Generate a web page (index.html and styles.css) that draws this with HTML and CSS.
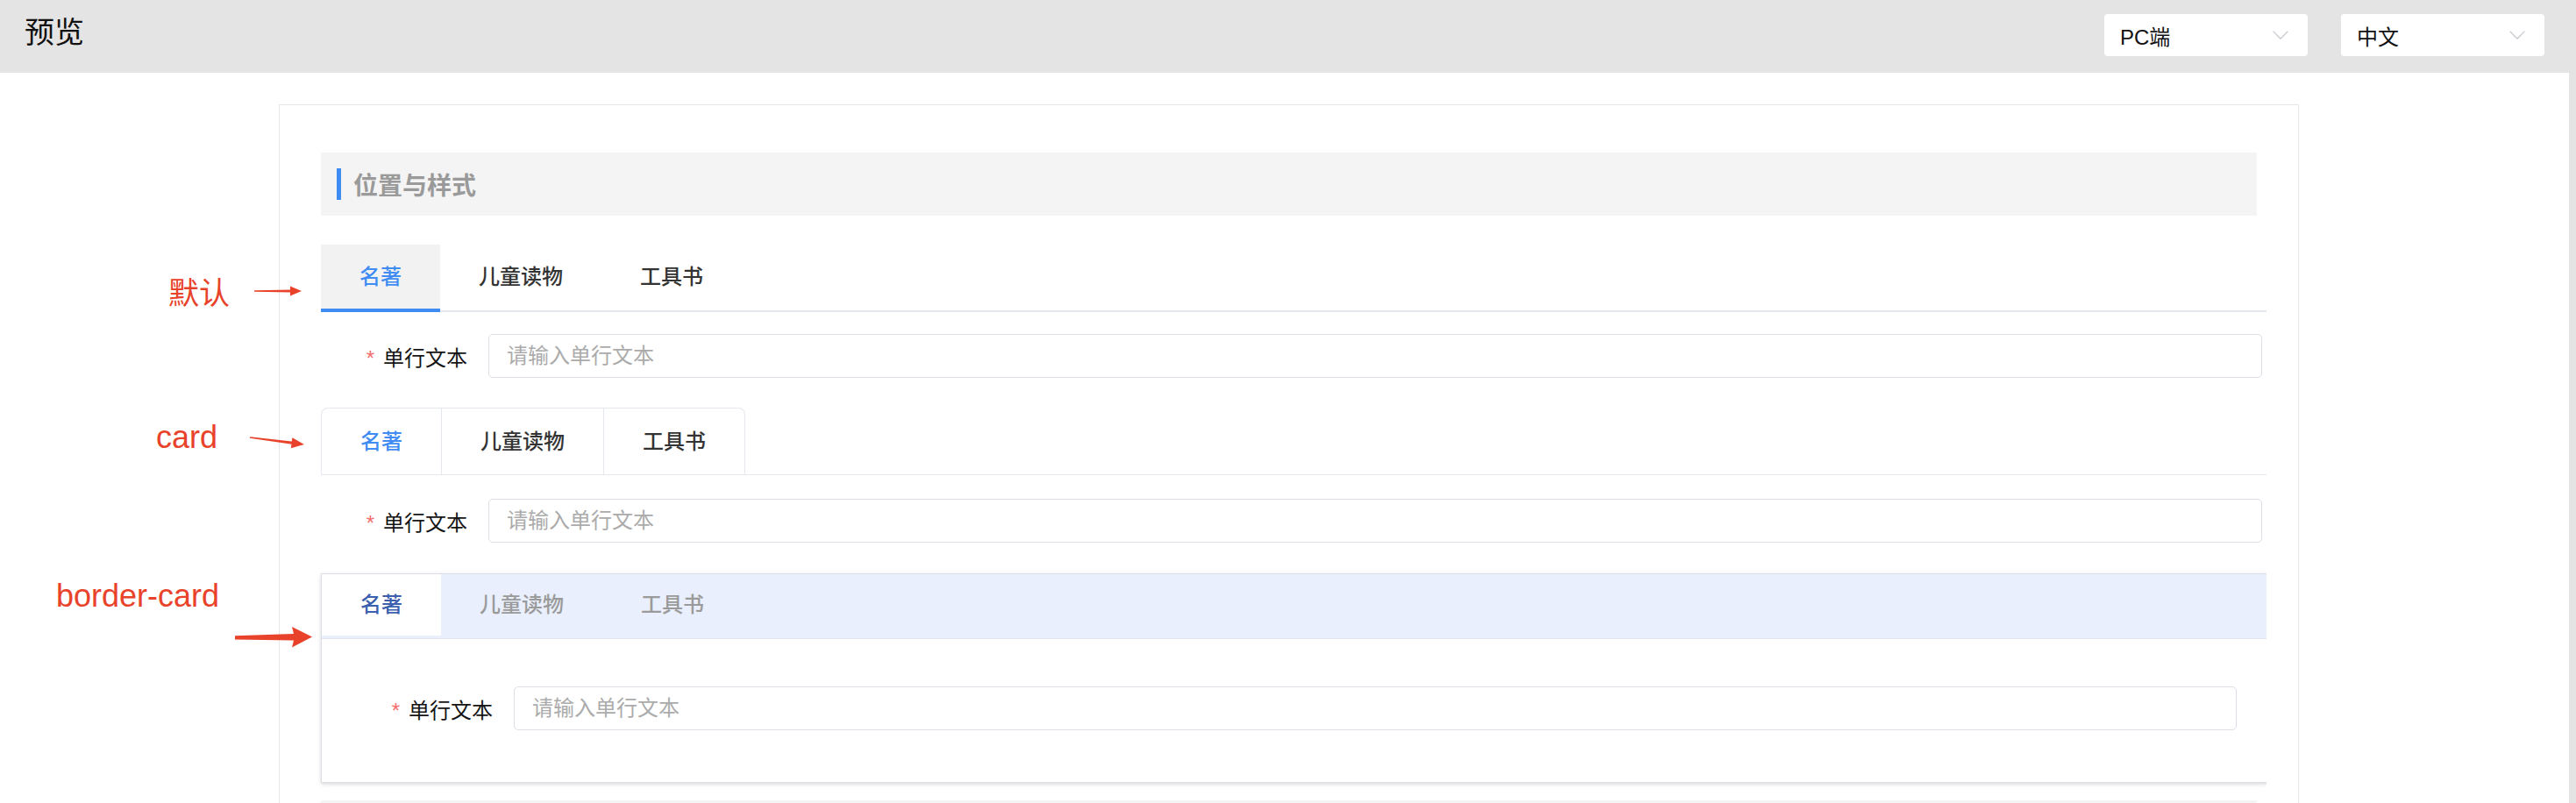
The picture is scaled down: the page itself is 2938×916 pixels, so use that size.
FILE: index.html
```html
<!DOCTYPE html>
<html lang="zh-CN">
<head>
<meta charset="utf-8">
<title>预览</title>
<link rel="stylesheet" href="styles.css">
</head>
<body>
<header class="topbar">
  <h1 class="topbar-title">预览</h1>
  <div class="topbar-actions">
    <div class="select">
      <span class="select-value">PC端</span>
      <svg class="select-arrow" viewBox="0 0 18 10"><path d="M0.6 0.6 L9 9.2 L17.4 0.6"/></svg>
    </div>
    <div class="select">
      <span class="select-value">中文</span>
      <svg class="select-arrow" viewBox="0 0 18 10"><path d="M0.6 0.6 L9 9.2 L17.4 0.6"/></svg>
    </div>
  </div>
</header>

<main class="stage">
  <section class="panel">
    <div class="section-title"><span class="section-mark"></span>位置与样式</div>

    <div class="demo demo-default">
      <div class="note note-default">默认</div>
      <svg class="pointer pointer-default" viewBox="0 0 56 14"><path d="M1 6.3 L44 5.6 L44 8.4 L1 7.7 Z"/><path d="M42 1.6 L55 7 L42 12.4 Z"/></svg>
      <div class="tabs-line">
        <div class="tab-line-item is-active">名著</div>
        <div class="tab-line-item">儿童读物</div>
        <div class="tab-line-item">工具书</div>
      </div>
      <div class="form-row">
        <label class="form-label"><span class="required">*</span>单行文本</label>
        <input class="input" type="text" placeholder="请输入单行文本">
      </div>
    </div>

    <div class="demo demo-card">
      <div class="note note-card">card</div>
      <svg class="pointer pointer-card" viewBox="0 0 68 24"><g transform="rotate(7.4 2 9)"><path d="M2 8.2 L52 7.4 L52 10.6 L2 9.8 Z"/><path d="M50 3 L64.5 9 L50 15 Z"/></g></svg>
      <div class="tabs-card-header">
        <div class="tabs-card-nav">
          <div class="tab-card-item is-active">名著</div>
          <div class="tab-card-item">儿童读物</div>
          <div class="tab-card-item">工具书</div>
        </div>
      </div>
      <div class="form-row">
        <label class="form-label"><span class="required">*</span>单行文本</label>
        <input class="input" type="text" placeholder="请输入单行文本">
      </div>
    </div>

    <div class="demo demo-border">
      <div class="note note-border">border-card</div>
      <svg class="pointer pointer-border" viewBox="0 0 92 28"><path d="M2 12.2 L69 10 L67 2 L90 13.5 L67 25.5 L69 17.5 L2 16.6 Z"/></svg>
      <div class="tabs-border">
        <div class="tabs-border-header">
          <div class="tab-border-item is-active">名著</div>
          <div class="tab-border-item">儿童读物</div>
          <div class="tab-border-item">工具书</div>
        </div>
        <div class="tabs-border-body">
          <div class="form-row">
            <label class="form-label"><span class="required">*</span>单行文本</label>
            <input class="input" type="text" placeholder="请输入单行文本">
          </div>
        </div>
      </div>
    </div>

    <div class="section-title section-next"><span class="section-mark"></span></div>
  </section>
</main>
</body>
</html>
```

FILE: styles.css
```css
* {
  box-sizing: border-box;
}

html,
body {
  margin: 0;
  padding: 0;
}

body {
  width: 2938px;
  height: 916px;
  overflow: hidden;
  background: #e4e4e4;
  font-family: "Liberation Sans", "Noto Sans CJK SC", sans-serif;
  color: #1a1a1a;
}

/* ---------- top bar ---------- */
.topbar {
  height: 83px;
  display: flex;
  justify-content: space-between;
  align-items: flex-start;
  padding: 16px 36px 0 28px;
  background: #e4e4e4;
}

.topbar-title {
  margin: 2px 0 0;
  font-family: "Noto Sans CJK SC", sans-serif;
  font-size: 34px;
  line-height: 34px;
  font-weight: 400;
  color: #111;
}

.topbar-actions {
  display: flex;
  gap: 38px;
}

.select {
  width: 232px;
  height: 48px;
  display: flex;
  align-items: center;
  justify-content: space-between;
  padding: 0 22px 0 18px;
  background: #fff;
  border-radius: 4px;
  font-size: 24px;
  color: #111;
}

.select-arrow {
  width: 18px;
  height: 10px;
  fill: none;
  stroke: #c4c7ce;
  stroke-width: 1.3;
}

/* ---------- stage ---------- */
.stage {
  margin-right: 8px;
  height: 833px;
  padding: 36px 0 0 318px;
  background: #fff;
  overflow: hidden;
}

.panel {
  width: 2304px;
  min-height: 797px;
  padding: 54px 36px 0 47px;
  border: 1px solid #e6e6e6;
  border-bottom: none;
}

.section-title {
  height: 72px;
  margin-right: 11px;
  display: flex;
  align-items: center;
  padding-left: 18px;
  background: #f4f4f4;
  font-size: 28px;
  font-weight: 700;
  color: #9a9a9a;
}

.section-mark {
  width: 5px;
  height: 36px;
  margin-right: 14px;
  background: #3f8cf5;
}

.section-next {
  margin-top: 20px;
}

.demo {
  position: relative;
}

.demo-default {
  margin-top: 33px;
}

.demo-card {
  margin-top: 34px;
}

.demo-border {
  margin-top: 35px;
}

/* ---------- annotations ---------- */
.note {
  position: absolute;
  font-size: 36px;
  line-height: 36px;
  color: #e8432a;
  white-space: nowrap;
}

.note-default {
  left: -174px;
  top: 35px;
  font-family: "Noto Sans CJK SC", sans-serif;
  font-size: 35px;
  line-height: 35px;
}

.note-card {
  left: -188px;
  top: 16px;
}

.note-border {
  left: -302px;
  top: 8px;
}

.pointer {
  position: absolute;
  fill: #e8432a;
}

.pointer-default {
  left: -77px;
  top: 46px;
  width: 56px;
  height: 14px;
}

.pointer-card {
  left: -83px;
  top: 25px;
  width: 68px;
  height: 24px;
}

.pointer-border {
  left: -100px;
  top: 59px;
  width: 92px;
  height: 28px;
}

/* ---------- default tabs ---------- */
.tabs-line {
  height: 77px;
  display: flex;
  align-items: flex-start;
  border-bottom: 2px solid #e4e7ed;
}

.tab-line-item {
  height: 77px;
  padding: 0 44px;
  border-bottom: 4px solid transparent;
  font-size: 24px;
  line-height: 73px;
  font-weight: 500;
  color: #333;
}

.tab-line-item.is-active {
  background: #f2f2f2;
  border-bottom-color: #3f8cf5;
  color: #418cf3;
}

/* ---------- card tabs ---------- */
.tabs-card-header {
  display: flex;
  border-bottom: 1px solid #e4e7ed;
}

.tabs-card-nav {
  display: flex;
  border: 1px solid #e4e7ed;
  border-bottom: none;
  border-radius: 8px 8px 0 0;
}

.tab-card-item {
  height: 75px;
  padding: 0 44px;
  font-size: 24px;
  line-height: 75px;
  font-weight: 500;
  color: #333;
}

.tab-card-item + .tab-card-item {
  border-left: 1px solid #e4e7ed;
}

.tab-card-item.is-active {
  color: #418cf3;
}

/* ---------- border-card tabs ---------- */
.tabs-border {
  margin-right: -1px;
  border: 1px solid #dcdfe6;
  background: #fff;
  box-shadow: 0 2px 4px rgba(0, 0, 0, 0.12), 0 0 6px rgba(0, 0, 0, 0.04);
  clip-path: inset(-12px 1px -12px -12px);
}

.tabs-border-header {
  display: flex;
  padding-bottom: 3px;
  background: #e9effc;
  border-bottom: 1px solid #dfe4ee;
}

.tab-border-item {
  height: 70px;
  padding: 0 44px;
  font-size: 24px;
  line-height: 70px;
  font-weight: 500;
  color: #9a9a9a;
}

.tab-border-item.is-active {
  background: #fff;
  color: #3c60ae;
}

.tabs-border-body {
  padding: 54px 34px 59px 28px;
}

/* ---------- form ---------- */
.form-row {
  display: flex;
  align-items: center;
  margin-top: 25px;
  padding-right: 5px;
}

.demo-card .form-row {
  margin-top: 27px;
}

.tabs-border-body .form-row {
  margin-top: 0;
  padding-right: 0;
}

.form-label {
  width: 191px;
  flex: none;
  padding-right: 24px;
  text-align: right;
  font-size: 24px;
  color: #151515;
  white-space: nowrap;
}

.required {
  margin-right: 10px;
  color: #f56c6c;
}

.input {
  flex: 1;
  min-width: 0;
  height: 50px;
  padding: 0 20px;
  border: 1px solid #dcdfe6;
  border-radius: 5px;
  background: #fff;
  font-family: "Liberation Sans", "Noto Sans CJK SC", sans-serif;
  font-size: 24px;
  color: #333;
  outline: none;
}

.input::placeholder {
  color: #ababab;
}
```
